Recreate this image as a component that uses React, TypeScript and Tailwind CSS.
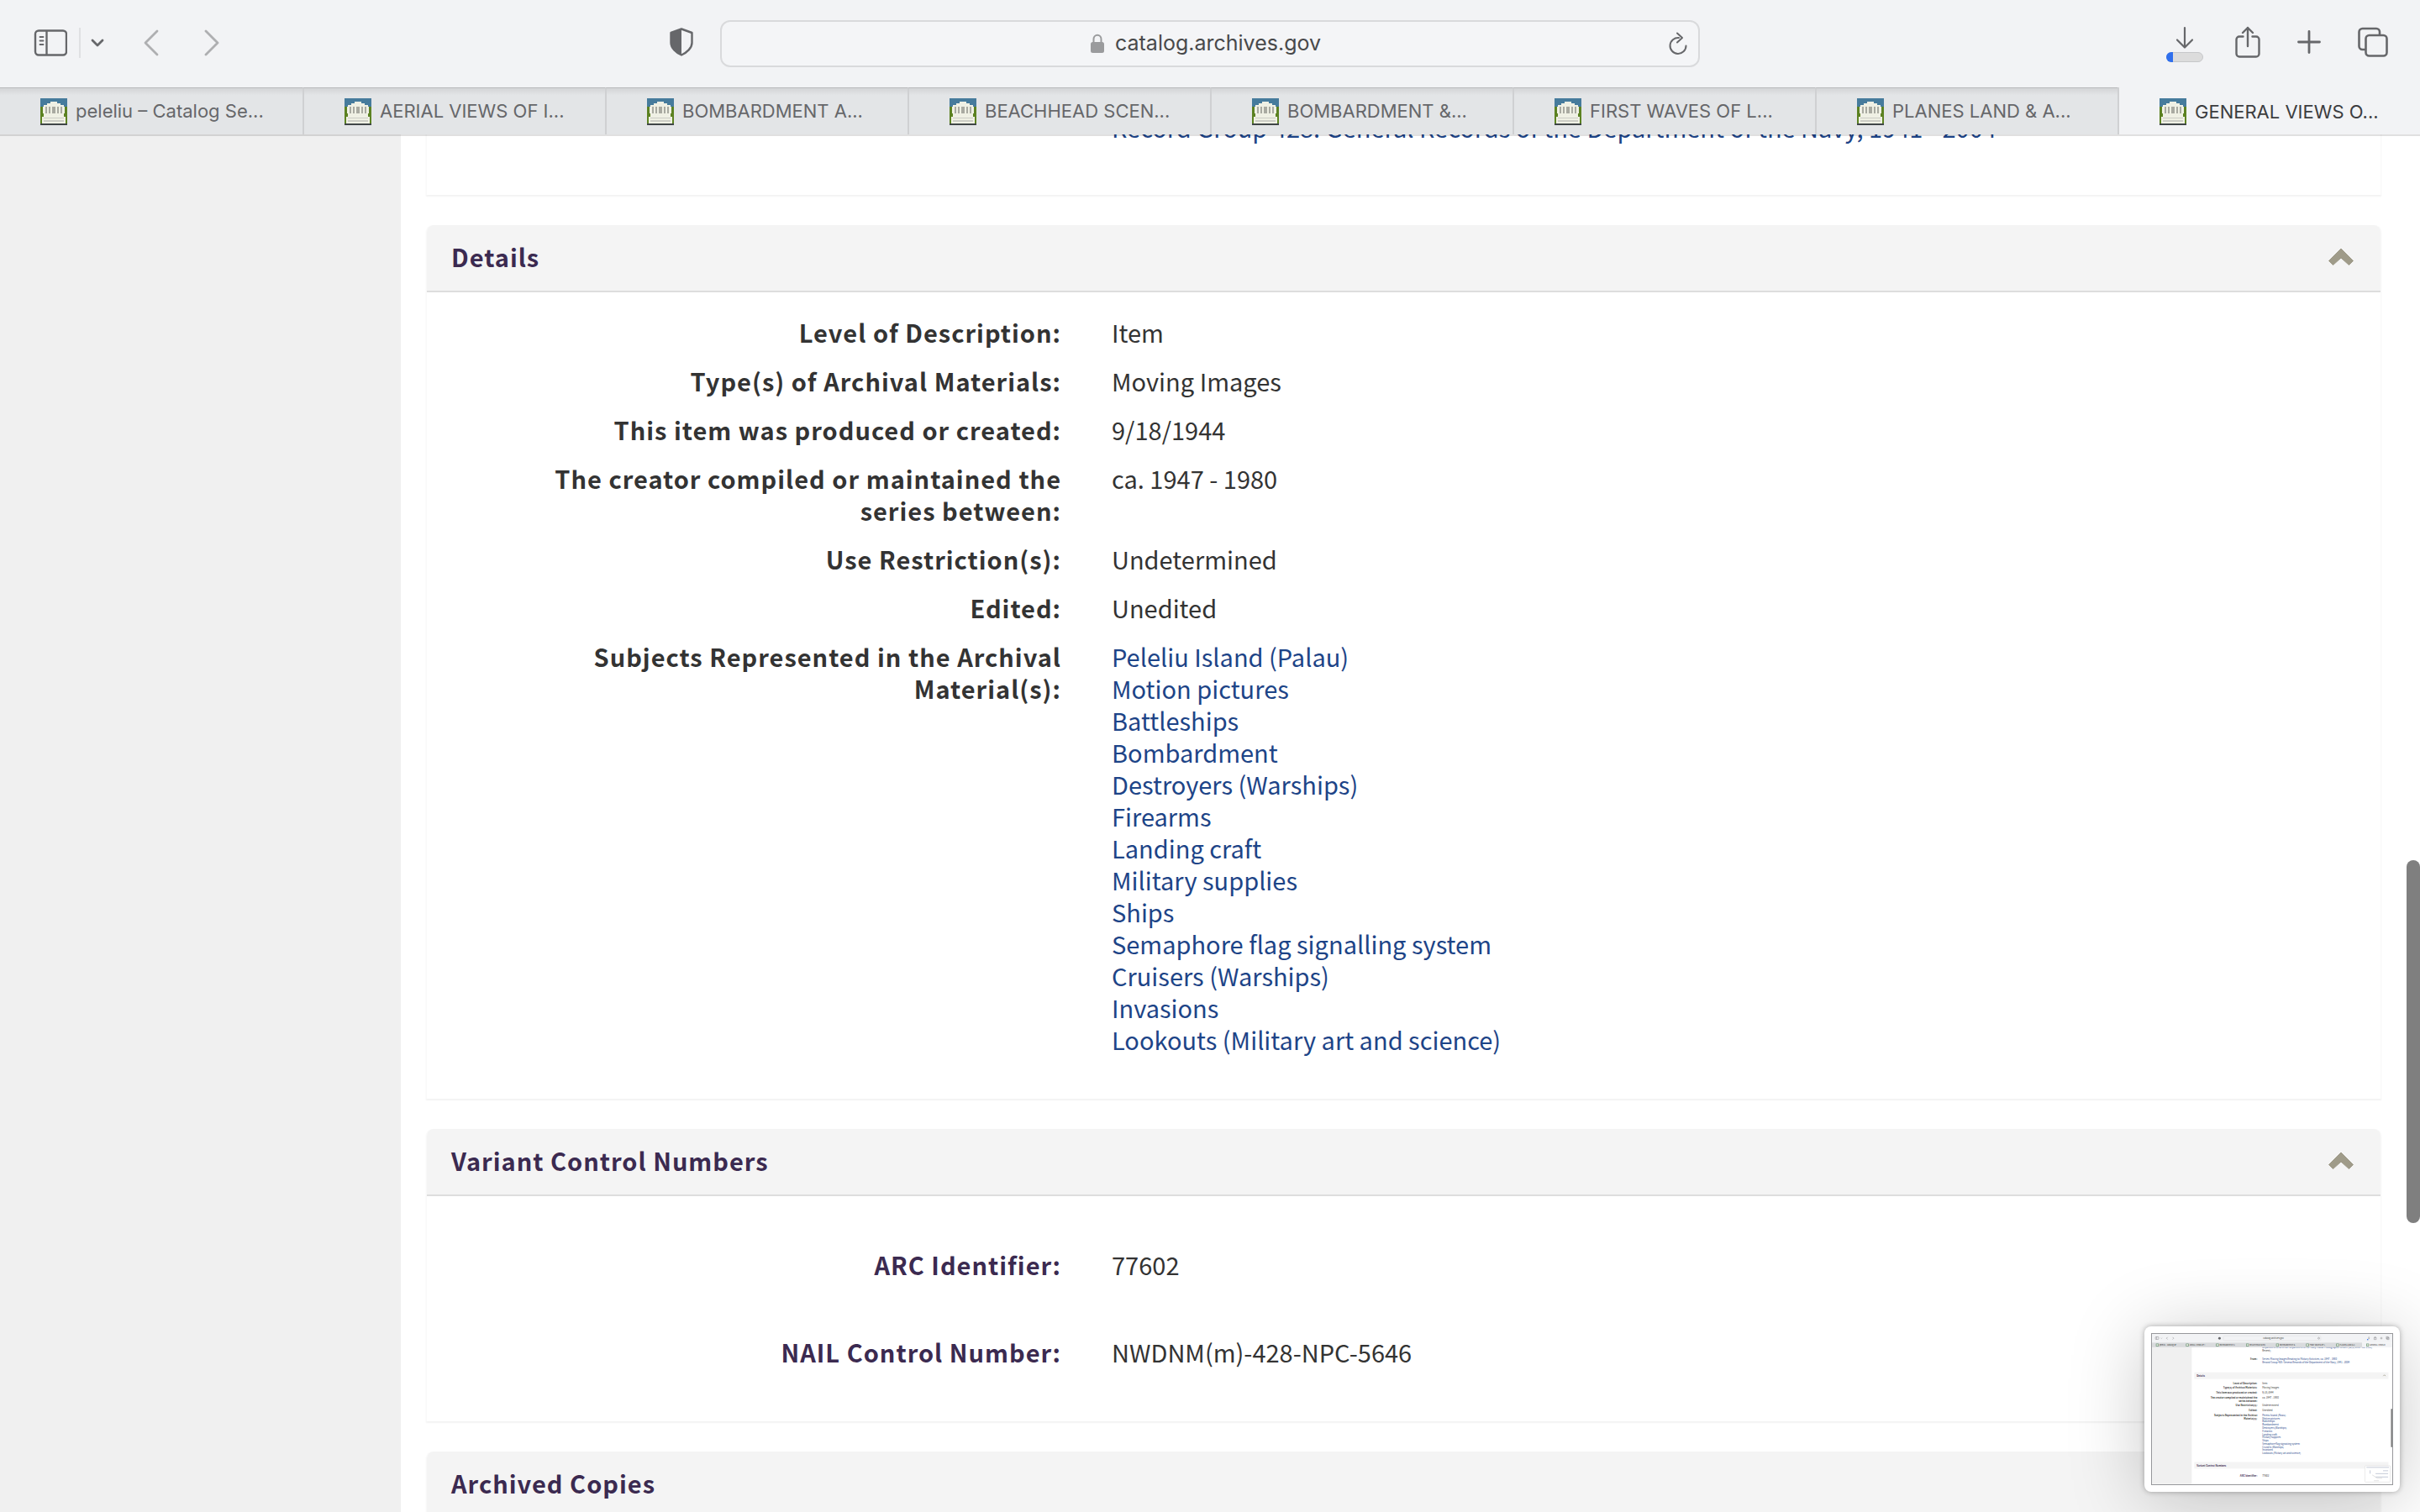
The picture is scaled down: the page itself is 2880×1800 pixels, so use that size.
import { ChevronDown, ChevronLeft, ChevronRight } from "lucide-react";
import type { ReactNode } from "react";

const TABS = [
  "peleliu – Catalog Se...",
  "AERIAL VIEWS OF I...",
  "BOMBARDMENT A...",
  "BEACHHEAD SCEN...",
  "BOMBARDMENT &...",
  "FIRST WAVES OF L...",
  "PLANES LAND & A...",
  "GENERAL VIEWS O...",
];

const DETAILS = [
  { label: "Level of Description:", value: "Item" },
  { label: "Type(s) of Archival Materials:", value: "Moving Images" },
  { label: "This item was produced or created:", value: "9/18/1944" },
  {
    label: "The creator compiled or maintained the series between:",
    value: "ca. 1947 - 1980",
  },
  { label: "Use Restriction(s):", value: "Undetermined" },
  { label: "Edited:", value: "Unedited" },
];

const SUBJECTS = [
  "Peleliu Island (Palau)",
  "Motion pictures",
  "Battleships",
  "Bombardment",
  "Destroyers (Warships)",
  "Firearms",
  "Landing craft",
  "Military supplies",
  "Ships",
  "Semaphore flag signalling system",
  "Cruisers (Warships)",
  "Invasions",
  "Lookouts (Military art and science)",
];

const CONTROL_NUMBERS = [
  { label: "ARC Identifier:", value: "77602" },
  { label: "NAIL Control Number:", value: "NWDNM(m)-428-NPC-5646" },
];

const RECORD_GROUP =
  "Record Group 428: General Records of the Department of the Navy, 1941 - 2004";

const Favicon = () => (
  <svg viewBox="0 0 32 32" className="h-8 w-8 shrink-0" aria-hidden="true">
    <rect width="32" height="32" fill="#5c8222" />
    <rect width="32" height="10" fill="#467b9c" />
    <rect y="30" width="32" height="2" fill="#3f4547" />
    <path
      d="M4 10V8h4V6h4V4h8v2h4v2h4v2h1v8h-1v4h2v8H2v-8h2v-4H3v-8z"
      fill="#eff0e4"
    />
    <path
      d="M6 10h2v8H6zM10 10h2v8h-2zM14 10h4v8h-4zM20 10h2v8h-2zM24 10h2v8h-2z"
      fill="#a9aaa1"
    />
    <path d="M4 23h24v1H4zM4 26h24v2H4z" fill="#cccdc5" />
  </svg>
);

const SidebarIcon = () => (
  <svg viewBox="0 0 40 32" className="h-8 w-10" fill="none" stroke="currentColor">
    <rect x="2" y="1.5" width="37" height="29" rx="4" strokeWidth="2.4" />
    <path d="M15.5 2v28" strokeWidth="2.4" />
    <path d="M7.5 9h4M7.5 13.500h4M7.5 18h4" strokeWidth="1.800" strokeLinecap="round" />
  </svg>
);

const ShieldIcon = () => (
  <svg viewBox="0 0 28 34" className="h-[34px] w-7">
    <path
      d="M14 1.500 26.500 6v12c0 6-6 11.500-12.500 14.500C7.500 29.500 1.500 24 1.500 18V6z"
      fill="none"
      stroke="currentColor"
      strokeWidth="2.4"
      strokeLinejoin="round"
    />
    <path d="M14 1.500V32.500C7.500 29.500 1.500 24 1.500 18V6z" fill="currentColor" />
  </svg>
);

const LockIcon = () => (
  <svg viewBox="0 0 18 24" className="h-6 w-[18px]" aria-hidden="true">
    <path d="M4.500 11V6.500a4.500 4.800 0 0 1 9 0V11" fill="none" stroke="#9a9b9d" strokeWidth="2" />
    <rect x="1" y="10" width="16" height="13" rx="2.500" fill="#9a9b9d" />
  </svg>
);

const ReloadIcon = () => (
  <svg viewBox="0 0 24 28" className="h-7 w-6" fill="none" stroke="currentColor" strokeWidth="2">
    <path d="M13 7a9.500 9.500 0 1 0 8.500 9.500" strokeLinecap="round" />
    <path d="m11 1.500 6 5.500-6 5.500" strokeLinecap="round" strokeLinejoin="round" />
  </svg>
);

const DownloadIcon = () => (
  <svg viewBox="0 0 44 44" className="h-11 w-11">
    <path
      d="M22 2v23M13 16.500l9 9 9-9"
      fill="none"
      stroke="currentColor"
      strokeWidth="2.200"
      strokeLinecap="round"
      strokeLinejoin="round"
    />
    <rect x="0.500" y="31.500" width="43" height="11" rx="5.500" fill="#dcdcdc" stroke="#c6c7c9" />
    <path d="M8 31v12H6a6 6 0 0 1 0-12z" fill="#2f6fed" />
  </svg>
);

const ShareIcon = () => (
  <svg
    viewBox="0 0 30 38"
    className="h-[38px] w-[30px]"
    fill="none"
    stroke="currentColor"
    strokeWidth="2.400"
    strokeLinecap="round"
    strokeLinejoin="round"
  >
    <path d="M9.500 12.500H5a3.500 3.500 0 0 0-3.500 3.500v17A3.500 3.500 0 0 0 5 36.500h20a3.500 3.500 0 0 0 3.500-3.500V16a3.500 3.500 0 0 0-3.500-3.500h-4.500" />
    <path d="M15 24V2M9 8l6-6 6 6" />
  </svg>
);

const PlusIcon = () => (
  <svg viewBox="0 0 28 28" className="size-7" stroke="currentColor" strokeWidth="2.800" strokeLinecap="round">
    <path d="M14 1.500v25M1.500 14h25" />
  </svg>
);

const TabsIcon = () => (
  <svg viewBox="0 0 36 36" className="h-9 w-9" fill="none" stroke="currentColor" strokeWidth="2.600">
    <rect x="9.500" y="10" width="25" height="24.500" rx="4" />
    <path d="M9 27H5.500a4 4 0 0 1-4-4V6a4 4 0 0 1 4-4H22a4 4 0 0 1 4 4v3.500" />
  </svg>
);

const Toolbar = () => (
  <div className="grid h-[104px] grid-cols-[1fr_40.5%_1fr] items-center bg-[#f2f3f5] text-[#66676a]">
    <div className="flex items-center justify-between pr-8 pb-1 pl-10">
      <div className="flex items-center pt-0.5">
        <button type="button" aria-label="Show sidebar">
          <SidebarIcon />
        </button>
        <span className="ml-3.5 h-9 w-0.5 bg-[#dfe0e2]" />
        <button type="button" aria-label="Sidebar options" className="ml-2">
          <ChevronDown className="size-6" strokeWidth={2.8} />
        </button>
        <button type="button" aria-label="Back" className="ml-6 text-[#aeafb1]">
          <ChevronLeft className="size-14" strokeWidth={1.2} />
        </button>
        <button type="button" aria-label="Forward" className="ml-4 text-[#aeafb1]">
          <ChevronRight className="size-14" strokeWidth={1.2} />
        </button>
      </div>
      <button type="button" aria-label="Privacy report">
        <ShieldIcon />
      </button>
    </div>

    <div className="flex h-14 items-center rounded-xl border-2 border-[#d9dadc] bg-[#f4f5f7] px-3">
      <label className="flex flex-1 items-center justify-center gap-3 pl-6">
        <LockIcon />
        <input
          type="text"
          aria-label="Address"
          defaultValue="catalog.archives.gov"
          className="w-[256px] bg-transparent text-[25px] text-[#48494b] outline-none"
        />
      </label>
      <button type="button" aria-label="Reload">
        <ReloadIcon />
      </button>
    </div>

    <div className="flex items-center justify-end pr-[38px] pb-1">
      <button type="button" aria-label="Downloads" className="pt-1.5">
        <DownloadIcon />
      </button>
      <button type="button" aria-label="Share" className="ml-[38px]">
        <ShareIcon />
      </button>
      <button type="button" aria-label="New tab" className="ml-11">
        <PlusIcon />
      </button>
      <button type="button" aria-label="Tab overview" className="ml-11">
        <TabsIcon />
      </button>
    </div>
  </div>
);

const TabBar = () => (
  <nav className="grid h-14 grid-cols-8 bg-[#f2f3f5]" aria-label="Open tabs">
    {TABS.map((title, i) => {
      const active = i === TABS.length - 1;
      return (
        <a
          key={title}
          href="#"
          aria-current={active ? "page" : undefined}
          className={
            active
              ? "flex items-center gap-2.5 border-l-2 border-[#cfd0d2] pt-0.5 pl-12 text-[#3c3d3f]"
              : "flex items-center gap-2.5 border-t border-l-2 border-t-[#b9babc] border-l-[#cfd0d2] bg-[#e3e5e7] bg-linear-to-b from-[#d3d4d6] to-transparent to-15% pl-12 text-[#66676a] first:border-l-0"
          }
        >
          <Favicon />
          <span className="text-[22px] whitespace-nowrap">{title}</span>
        </a>
      );
    })}
  </nav>
);

const ChevronUpBold = () => (
  <svg viewBox="0 0 30 20" className="h-5 w-[30px]" aria-hidden="true">
    <path
      d="M15 0 29.500 14.500 24.500 19.500 15 11 5.500 19.500 0.500 14.500z"
      fill="#9f9b89"
      stroke="#9f9b89"
      strokeLinejoin="round"
    />
  </svg>
);

const Panel = ({ title, children }: { title?: string; children?: ReactNode }) => (
  <section className="mb-9 rounded-t-lg border-x border-[#f9f9f9] shadow-[0_2px_2px_rgba(0,0,0,0.05)]">
    {title && (
      <h2 className="rounded-t-lg border-b-2 border-[#ddd] bg-[#f4f4f4]">
        <button
          type="button"
          aria-expanded="true"
          className="flex h-[78px] w-full items-center justify-between pr-8 pb-0.5 pl-[29px] text-left text-[29px] font-semibold tracking-[1px] text-[#3b2a50]"
        >
          {title}
          <ChevronUpBold />
        </button>
      </h2>
    )}
    {children}
  </section>
);

const Row = ({ label, children }: { label?: string; children: ReactNode }) => (
  <div className="flex py-2.5 text-[29px] leading-[38px]">
    <dt className="w-1/3 pr-5 pl-[120px] text-right font-semibold tracking-[1px]">
      {label}
    </dt>
    <dd className="flex-1 pl-10 text-[#333]">{children}</dd>
  </div>
);

// Miniature of the window inside the floating capture preview
const Thumbnail = () => (
  <svg
    viewBox="0 0 2880 1800"
    className="w-full border border-[#97989b]"
    fontSize="29"
    fill="#333"
    role="img"
    aria-label="Screen capture preview"
  >
    <rect width="2880" height="1800" fill="#fff" />
    <rect y="160" width="477" height="1640" fill="#f0f0f0" />
    <g fill="#1d4487">
      <text x="1322" y="172">
        Department of Defense. Department of the Navy. Naval Photographic Center. (12/1/1959 - ca. 1998)
      </text>
      <text x="1322" y="312">
        Series: Moving Images Relating to Military Activities, ca. 1947 - 1980
      </text>
      <text x="1322" y="355">{RECORD_GROUP}</text>
    </g>
    <text x="1322" y="207">Recent)</text>
    <text x="1262" y="312" textAnchor="end" fontWeight="600">
      From:
    </text>
    <rect width="2880" height="104" fill="#f2f3f5" />
    <rect y="104" width="2520" height="56" fill="#d9dbdd" />
    <rect x="2520" y="104" width="360" height="56" fill="#f2f3f5" />
    <rect x="857" y="24" width="1166" height="56" rx="12" fill="none" stroke="#d9dadc" strokeWidth="4" />
    <g fill="none" stroke="#66676a" strokeWidth="4">
      <rect x="42" y="35" width="38" height="30" rx="5" />
      <path d="M56 35v30M188 38l-14 14 14 14M247 38l14 14-14 14M108 48l6 6 6-6" />
      <path d="M2600 32v26M2590 48l10 10 10-10M2662 42h26v25h-26zM2675 32v22M2735 51h28M2749 37v28M2808 34h24v24h-24zM2817 43h24v24h-24z" />
      <circle cx="1999" cy="52" r="10" />
    </g>
    <circle cx="810" cy="52" r="15" fill="#66676a" />
    <rect x="2578" y="62" width="14" height="12" fill="#2f6fed" />
    <text x="1333" y="61" fontSize="26">
      catalog.archives.gov
    </text>
    {TABS.map((title, i) => (
      <g key={title}>
        <rect x={i * 360 + 48} y="117" width="32" height="32" fill="#5a8a6a" />
        <rect x={i * 360 + 54} y="123" width="20" height="20" fill="#eff0e4" />
        <text x={i * 360 + 90} y="141" fontSize="22">
          {title}
        </text>
      </g>
    ))}
    <rect x="507" y="460" width="2327" height="80" fill="#f4f4f4" />
    <rect x="507" y="1535" width="2327" height="80" fill="#f4f4f4" />
    <g fill="#3b2a50" fontWeight="600">
      <text x="537" y="510">Details</text>
      <text x="537" y="1587">Variant Control Numbers</text>
      <text x="1262" y="1710" textAnchor="end">ARC Identifier:</text>
    </g>
    <text x="1322" y="1710">77602</text>
    <g fontWeight="600" textAnchor="end">
      <text x="1262" y="600">Level of Description:</text>
      <text x="1262" y="658">Type(s) of Archival Materials:</text>
      <text x="1262" y="716">This item was produced or created:</text>
      <text x="1262" y="774">The creator compiled or maintained the</text>
      <text x="1262" y="812">series between:</text>
      <text x="1262" y="870">Use Restriction(s):</text>
      <text x="1262" y="928">Edited:</text>
      <text x="1262" y="986">Subjects Represented in the Archival</text>
      <text x="1262" y="1024">Material(s):</text>
    </g>
    <text x="1322" y="600">Item</text>
    <text x="1322" y="658">Moving Images</text>
    <text x="1322" y="716">9/18/1944</text>
    <text x="1322" y="774">ca. 1947 - 1980</text>
    <text x="1322" y="870">Undetermined</text>
    <text x="1322" y="928">Unedited</text>
    {SUBJECTS.map((subject, i) => (
      <text key={subject} x="1322" y={986 + i * 38} fill="#1d4487">
        {subject}
      </text>
    ))}
    <path d="m2772 505 14-14 14 14" fill="none" stroke="#9f9b89" strokeWidth="8" />
    <rect x="2864" y="895" width="16" height="465" rx="8" fill="#7f7f7f" />
    <rect x="2552" y="1580" width="304" height="196" rx="8" fill="#fff" stroke="#ddd" strokeWidth="6" />
    <path
      d="M2570 1600h270M2615 1635v40M2770 1640h60M2680 1715h150M2680 1675h150"
      stroke="#a9b2c6"
      strokeWidth="7"
      fill="none"
    />
    <path d="M2640 1690l60 40h60M2660 1760h60" stroke="#ccc" strokeWidth="6" fill="none" />
  </svg>
);

export default function App() {
  return (
    <div className="relative flex h-screen flex-col overflow-hidden bg-white font-['Inter',sans-serif]">
      <header className="relative z-10 shadow-[0_2px_0_rgba(0,0,0,0.12)]">
        <Toolbar />
        <TabBar />
      </header>

      <div className="flex min-h-0 flex-1 overflow-hidden font-['Noto_Sans_CJK_SC',sans-serif] text-[#333]">
        <aside className="w-[477px] shrink-0 bg-[#f0f0f0]" />
        <main className="-mt-[38px] flex-1 pr-[46px] pl-[30px]">
          <Panel>
            <dl className="pb-[52px]">
              <Row>
                <a href="#" className="text-[#1d4487]">
                  {RECORD_GROUP}
                </a>
              </Row>
            </dl>
          </Panel>

          <Panel title="Details">
            <dl className="pt-[18px] pb-[42px]">
              {DETAILS.map((d) => (
                <Row key={d.label} label={d.label}>
                  {d.value}
                </Row>
              ))}
              <Row label="Subjects Represented in the Archival Material(s):">
                <ul>
                  {SUBJECTS.map((subject) => (
                    <li key={subject}>
                      <a href="#" className="text-[#1d4487]">
                        {subject}
                      </a>
                    </li>
                  ))}
                </ul>
              </Row>
            </dl>
          </Panel>

          <Panel title="Variant Control Numbers">
            <dl className="flex flex-col gap-[46px] pt-[52px] pb-[54px] text-[#3b2a50]">
              {CONTROL_NUMBERS.map((c) => (
                <Row key={c.label} label={c.label}>
                  {c.value}
                </Row>
              ))}
            </dl>
          </Panel>

          <Panel title="Archived Copies" />
        </main>
      </div>

      <div className="absolute top-[1024px] right-0 h-[432px] w-4 rounded-full bg-[#7f7f7f]" />

      <div className="absolute right-6 bottom-6 w-[304px] rounded-lg bg-white p-2 font-['Noto_Sans_CJK_SC',sans-serif] shadow-[0_0_6px_rgba(0,0,0,0.3),0_10px_90px_rgba(0,0,0,0.22)]">
        <Thumbnail />
      </div>
    </div>
  );
}
